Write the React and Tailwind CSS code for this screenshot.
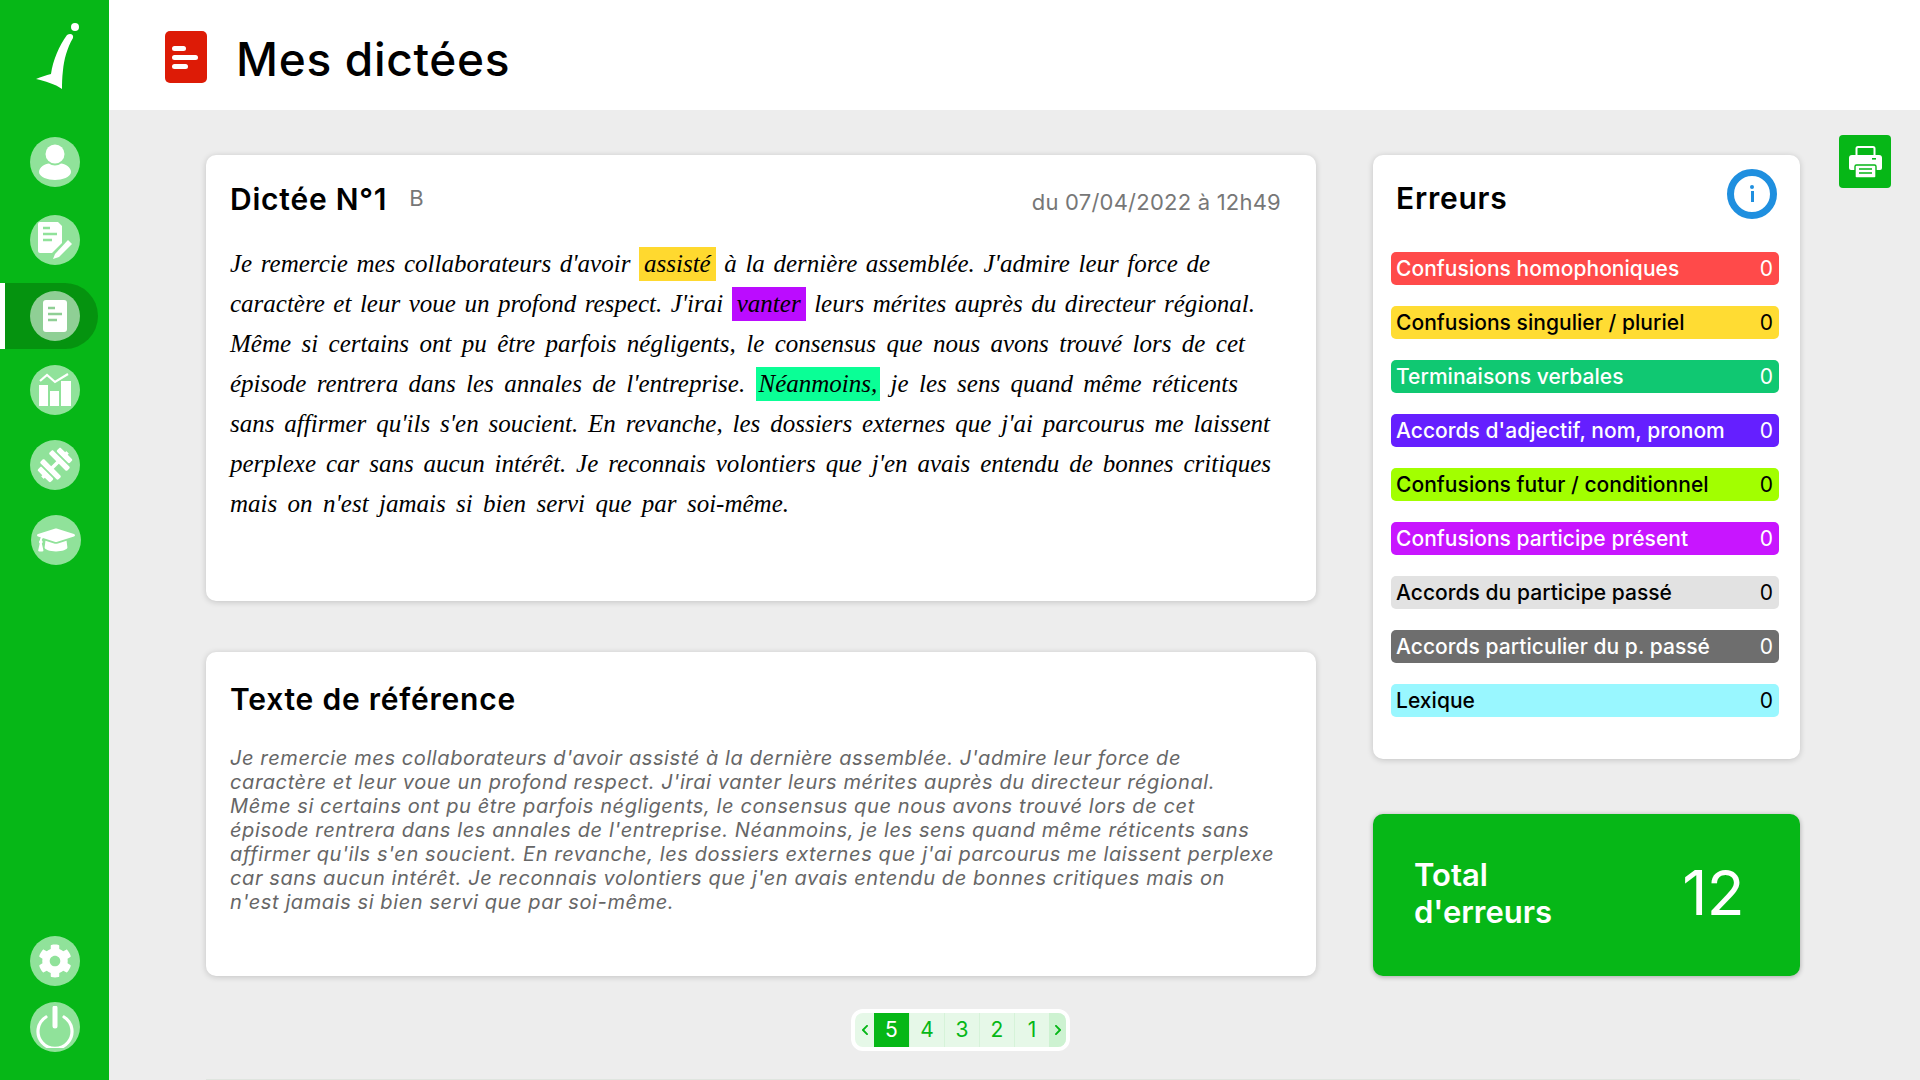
import React from "react";
import { FaGraduationCap, FaDumbbell, FaCog, FaChevronLeft, FaChevronRight } from "react-icons/fa";

const sans = "font-['Inter','Liberation_Sans',sans-serif]";

function Circle({ children }) {
  return (
    <div className="w-[50px] h-[50px] rounded-full bg-[#90e29a] flex items-center justify-center text-white">
      {children}
    </div>
  );
}

function Logo() {
  return (
    <svg width="46" height="70" viewBox="0 0 46 70">
      <path d="M1 59 C6 57 11 55 16 54 C18 40 24 26 32 15 C35 13 39 14 38 18 C32 28 29 40 28 50 C27 58 27 64 27 69 C20 64 10 61 1 59 Z" fill="#fff" />
      <circle cx="40" cy="7" r="4" fill="#fff" />
    </svg>
  );
}

function User() {
  return (
    <svg width="34" height="38" viewBox="0 0 34 38" fill="#fff">
      <circle cx="17" cy="11" r="9.5" />
      <path d="M1 29 C1 24 7 21 11 20.5 C14 23 20 23 23 20.5 C27 21 33 24 33 29 C33 34 24 37 17 37 C10 37 1 34 1 29 Z" />
    </svg>
  );
}

function FileEdit() {
  return (
    <svg width="36" height="38" viewBox="0 0 36 38">
      <path d="M3 1 H21 L25 5 V22 L15 32 H3 A2 2 0 0 1 1 30 V3 A2 2 0 0 1 3 1 Z" fill="#fff" />
      <path d="M6 7 H13 M6 13 H20 M6 19 H15" stroke="#90e29a" strokeWidth="2.4" />
      <path d="M18 33 L31 19 L35 23 L22 36 L16 38 Z" fill="#fff" />
    </svg>
  );
}

function FileDoc({ accent }) {
  return (
    <svg width="24" height="32" viewBox="0 0 24 32">
      <rect x="0" y="0" width="24" height="32" rx="3" fill="#fff" />
      <path d="M5 8 H12 M5 14 H19 M5 20 H14" stroke={accent} strokeWidth="2.6" />
    </svg>
  );
}

function Chart() {
  return (
    <svg width="34" height="34" viewBox="0 0 34 34" fill="#fff">
      <path d="M1 33 V12 H10 V33 Z M12 33 V18 H21 V33 Z M23 33 V8 H33 V33 Z" />
      <path d="M2 8 L9 2 L17 9 L30 1" fill="none" stroke="#fff" strokeWidth="2.2" />
    </svg>
  );
}

function Power() {
  return (
    <svg width="38" height="42" viewBox="0 0 38 42" fill="none" stroke="#fff" strokeLinecap="round">
      <path d="M10 11 A17 17 0 1 0 28 11" strokeWidth="3.2" />
      <path d="M19 2 V20" strokeWidth="5" />
    </svg>
  );
}

function Printer() {
  return (
    <svg width="33" height="32" viewBox="0 0 33 32">
      <rect x="7.5" y="1" width="18" height="10" rx="1.5" fill="none" stroke="#fff" strokeWidth="2" />
      <path d="M3 9 H30 A3 3 0 0 1 33 12 V22 A2 2 0 0 1 31 24 H2 A2 2 0 0 1 0 22 V12 A3 3 0 0 1 3 9 Z" fill="#fff" />
      <rect x="23" y="12" width="4" height="1.6" fill="#06b717" />
      <rect x="6" y="19" width="21" height="13" rx="1.5" fill="#fff" stroke="#06b717" strokeWidth="1.4" />
      <path d="M10 23 H23 M10 27 H23" stroke="#06b717" strokeWidth="1.6" />
    </svg>
  );
}

const bars = [
  ["Confusions homophoniques", "bg-[#ff4a4a]", "text-white"],
  ["Confusions singulier / pluriel", "bg-[#ffdc33]", "text-black"],
  ["Terminaisons verbales", "bg-[#10c872]", "text-white"],
  ["Accords d'adjectif, nom, pronom", "bg-[#651fff]", "text-white"],
  ["Confusions futur / conditionnel", "bg-[#a2ff00]", "text-black"],
  ["Confusions participe présent", "bg-[#c815ff]", "text-white"],
  ["Accords du participe passé", "bg-[#e2e2e2]", "text-black"],
  ["Accords particulier du p. passé", "bg-[#6e6e6e]", "text-white"],
  ["Lexique", "bg-[#99f7ff]", "text-black"],
];

const refLines = [
  "Je remercie mes collaborateurs d'avoir assisté à la dernière assemblée. J'admire leur force de",
  "caractère et leur voue un profond respect. J'irai vanter leurs mérites auprès du directeur régional.",
  "Même si certains ont pu être parfois négligents, le consensus que nous avons trouvé lors de cet",
  "épisode rentrera dans les annales de l'entreprise. Néanmoins, je les sens quand même réticents sans",
  "affirmer qu'ils s'en soucient. En revanche, les dossiers externes que j'ai parcourus me laissent perplexe",
  "car sans aucun intérêt. Je reconnais volontiers que j'en avais entendu de bonnes critiques mais on",
  "n'est jamais si bien servi que par soi-même.",
];

function Hl({ className, children }) {
  return <span className={`inline-block h-[34px] leading-[34px] ${className}`}>{children}</span>;
}

const lineCls = "block h-[40px] leading-[40px] whitespace-nowrap [text-align-last:justify]";
const titleCls = "text-[30px] font-semibold text-black tracking-[0.026em]";

export default function App() {
  return (
    <div className={`flex h-screen w-screen overflow-hidden bg-[#ededed] ${sans}`}>
      <aside className="w-[109px] shrink-0 bg-[#06b717] flex flex-col">
        <div className="h-[88px] mt-[20px] pl-[35px]">
          <Logo />
        </div>
        <div className="flex flex-col mt-[29px]">
          <div className="pl-[30px] h-[50px]"><Circle><User /></Circle></div>
          <div className="pl-[30px] h-[50px] mt-[28px]"><Circle><FileEdit /></Circle></div>
          <div className="mt-[18px] w-[98px] h-[66px] bg-[#05930f] rounded-r-[33px] border-l-[5px] border-white flex items-center pl-[25px]">
            <div className="w-[50px] h-[50px] rounded-full bg-[#8fcf95] flex items-center justify-center">
              <FileDoc accent="#8fcf95" />
            </div>
          </div>
          <div className="pl-[30px] h-[50px] mt-[16px]"><Circle><Chart /></Circle></div>
          <div className="pl-[30px] h-[50px] mt-[25px]"><Circle><FaDumbbell size={36} className="-rotate-45" /></Circle></div>
          <div className="pl-[31px] h-[50px] mt-[25px]"><Circle><FaGraduationCap size={38} /></Circle></div>
        </div>
        <div className="mt-auto pb-[28px] flex flex-col gap-[16px] pl-[30px]">
          <Circle><FaCog size={34} /></Circle>
          <Circle><Power /></Circle>
        </div>
      </aside>

      <main className="flex-1 min-w-0 flex flex-col">
        <header className="h-[110px] shrink-0 bg-white flex items-center pl-[56px]">
          <div className="w-[42px] h-[52px] bg-[#dd1b06] rounded-[5px] flex flex-col justify-center gap-[4px] pl-[7px] mt-[4px]">
            <div className="w-[14px] h-[5px] rounded-full bg-white" />
            <div className="w-[26px] h-[5px] rounded-full bg-white" />
            <div className="w-[16px] h-[5px] rounded-full bg-white" />
          </div>
          <h1 className="ml-[29px] text-[46px] leading-none font-medium text-black tracking-[0.015em] mt-[8px]">Mes dictées</h1>
        </header>

        <div className="flex items-start pl-[97px] pt-[45px]">
          <div className="w-[1110px] shrink-0 flex flex-col">
            <section className="h-[446px] bg-white rounded-[10px] shadow-[0_1px_6px_rgba(0,0,0,0.18)] pl-[24px] pr-[35px] pt-[22px]">
              <div className="flex items-center h-[44px]">
                <h2 className={titleCls}>Dictée N°1</h2>
                <span className="ml-[22px] text-[22px] text-[#777] -mt-[2px]">B</span>
                <span className="ml-auto text-[22px] text-[#777] mt-[7px] tracking-[0.01em]">du 07/04/2022 à 12h49</span>
              </div>
              <div className="mt-[23px] text-[25px] italic text-black font-['Liberation_Serif',serif]">
                <div className={`${lineCls} w-[980px]`}>Je remercie mes collaborateurs d'avoir <Hl className="px-[5px] bg-[#ffd92f]">assisté</Hl> à la dernière assemblée. J'admire leur force de</div>
                <div className={`${lineCls} w-[1025px]`}>caractère et leur voue un profond respect. J'irai <Hl className="px-[5px] bg-[#bb0cff]">vanter</Hl> leurs mérites auprès du directeur régional.</div>
                <div className={`${lineCls} w-[1015px]`}>Même si certains ont pu être parfois négligents, le consensus que nous avons trouvé lors de cet</div>
                <div className={`${lineCls} w-[1008px]`}>épisode rentrera dans les annales de l'entreprise. <Hl className="px-[3px] bg-[#0aff96]">Néanmoins,</Hl> je les sens quand même réticents</div>
                <div className={`${lineCls} w-[1040px]`}>sans affirmer qu'ils s'en soucient. En revanche, les dossiers externes que j'ai parcourus me laissent</div>
                <div className={`${lineCls} w-[1041px]`}>perplexe car sans aucun intérêt. Je reconnais volontiers que j'en avais entendu de bonnes critiques</div>
                <div className={`${lineCls} w-[559px]`}>mais on n'est jamais si bien servi que par soi-même.</div>
              </div>
            </section>

            <section className="mt-[51px] h-[324px] bg-white rounded-[10px] shadow-[0_1px_6px_rgba(0,0,0,0.18)] pl-[24px] pr-[35px] pt-[26px]">
              <h2 className={`${titleCls} leading-[42px]`}>Texte de référence</h2>
              <div className="mt-[26px] text-[20px] italic text-[#666]">
                {refLines.map((l, i) => (
                  <div key={i} className="h-[24px] leading-[24px] whitespace-nowrap tracking-[0.03em]">{l}</div>
                ))}
              </div>
            </section>

            <div className="mt-[33px] ml-[645px] w-[219px] h-[42px] bg-[#e6f8e8] border-[4px] border-white rounded-[12px] overflow-hidden flex items-stretch text-[#06b717] text-[21px]">
              <div className="w-[19px] flex items-center justify-center"><FaChevronLeft size={12} /></div>
              <div className="w-[35px] bg-[#06b717] text-white flex items-center justify-center">5</div>
              {[4, 3, 2, 1].map((n) => (
                <div key={n} className="w-[35px] flex items-center justify-center border-l border-[#d6f3d9]">{n}</div>
              ))}
              <div className="flex-1 bg-[#cdf2d1] flex items-center justify-center"><FaChevronRight size={12} /></div>
            </div>
          </div>

          <div className="ml-[57px] w-[427px] shrink-0 flex flex-col">
            <section className="h-[604px] bg-white rounded-[10px] shadow-[0_1px_6px_rgba(0,0,0,0.18)] pl-[18px] pr-[21px] pt-[14px]">
              <div className="flex items-center justify-between h-[50px] pl-[5px]">
                <h2 className={`${titleCls} mt-[9px]`}>Erreurs</h2>
                <div className="w-[50px] h-[50px] rounded-full border-[7px] border-[#1f8fdf] bg-white flex flex-col items-center justify-center gap-[2px] mr-[2px] -mt-[1px]">
                  <div className="w-[4px] h-[4px] rounded-full bg-[#1f8fdf]" />
                  <div className="w-[3px] h-[11px] bg-[#1f8fdf]" />
                </div>
              </div>
              <div className="mt-[33px] flex flex-col gap-[21px]">
                {bars.map(([label, bg, fg]) => (
                  <div key={label} className={`h-[33px] rounded-[5px] flex items-center justify-between pl-[5px] pr-[6px] text-[21px] font-medium tracking-[0.002em] whitespace-nowrap ${bg} ${fg}`}>
                    <span>{label}</span>
                    <span className="font-normal">0</span>
                  </div>
                ))}
              </div>
            </section>
            <section className="mt-[55px] h-[162px] bg-[#06b717] rounded-[10px] shadow-[0_1px_5px_rgba(0,0,0,0.3)] text-white flex items-center pl-[41px] pr-[56px] justify-between">
              <div className="text-[31px] leading-[37px] font-semibold -mt-[5px]">Total<br />d'erreurs</div>
              <div className="text-[62px] leading-none font-normal -mt-[4px] tracking-[-0.01em]">12</div>
            </section>
          </div>

          <button className="ml-[39px] -mt-[20px] w-[52px] h-[53px] bg-[#06b717] rounded-[4px] flex items-center justify-center text-white">
            <Printer />
          </button>
        </div>

        <div className="mt-[28px] ml-[97px] w-[1594px] border-t border-[#dfe5df]" />
      </main>
    </div>
  );
}
